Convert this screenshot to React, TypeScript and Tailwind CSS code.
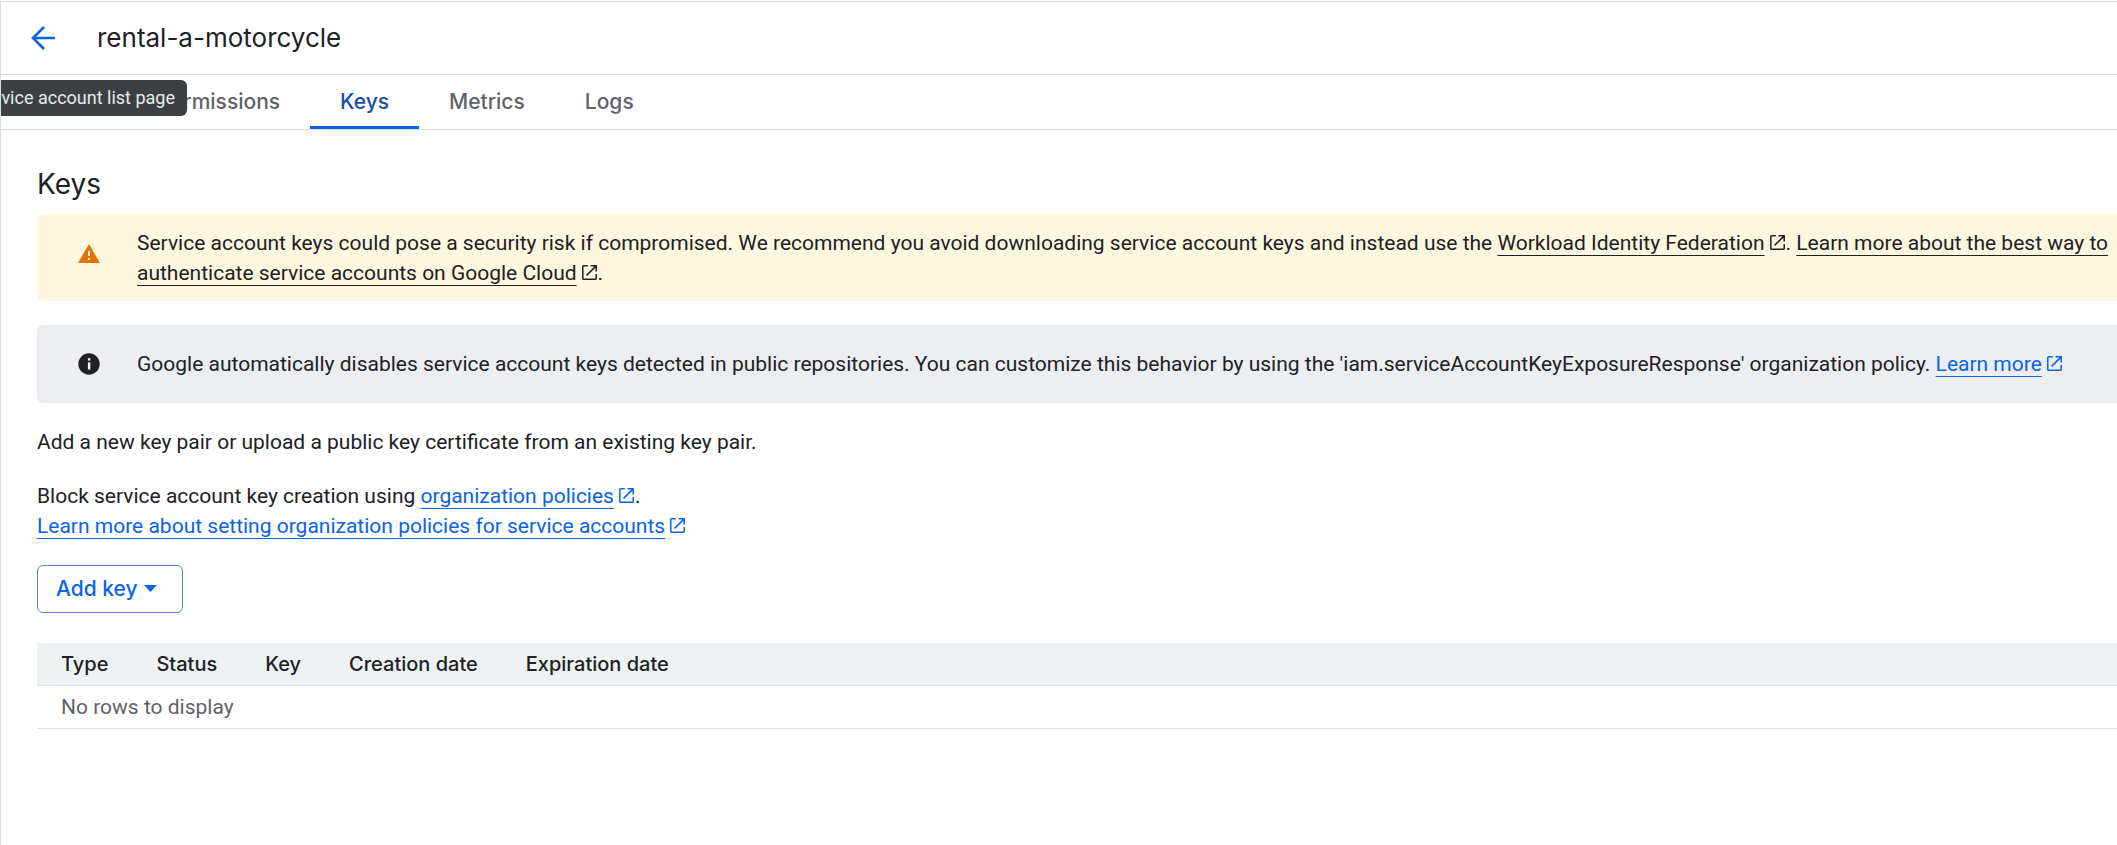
import type { ReactNode } from "react";

const tabs = ["Details", "Permissions", "Keys", "Metrics", "Logs"];
const columns = ["Type", "Status", "Key", "Creation date", "Expiration date"];

function ExternalIcon() {
  return (
    <svg
      viewBox="0 0 15 15"
      className="mr-px ml-[5px] inline-block size-[15px] align-baseline"
      fill="none"
      stroke="currentColor"
      strokeWidth="1.5"
      aria-hidden="true"
    >
      <path d="M5.8.8H1.6Q.8.8.8 1.6v11.8q0 .8.8.8h11.8q.8 0 .8-.8V9M8.6.8h5.6v5.6M13.9 1.1 4.6 10.4" />
    </svg>
  );
}

function ExternalLink({ children, tone }: { children: ReactNode; tone: "dark" | "blue" }) {
  return (
    <a href="#" className={tone === "dark" ? "text-[#202124]" : "text-[#0b63e5]"}>
      <span className="underline decoration-1 underline-offset-[5px] [text-decoration-skip-ink:none]">{children}</span>
      <ExternalIcon />
    </a>
  );
}

export default function App() {
  return (
    <div className="mt-px min-h-[calc(100vh-1px)] overflow-x-hidden border-t border-l border-[#dadce0] bg-white font-[Roboto,sans-serif] text-[21px] leading-[30px] text-[#202124]">
      <header className="relative flex h-[73px] items-center border-b border-[#dadce0] pl-[26px]">
        <button type="button" aria-label="Back" className="flex size-8 items-center justify-center text-[#0b63e5]">
          <svg viewBox="0 0 24 24" className="size-6" fill="none" stroke="currentColor" strokeWidth="2.6" aria-hidden="true">
            <path d="M24 12H2M13 1 2 12l11 11" />
          </svg>
        </button>
        <h1 className="ml-[38px] font-[Inter,sans-serif] text-[26px] leading-9">rental-a-motorcycle</h1>
        <div
          role="tooltip"
          className="absolute top-[78px] right-[calc(100%-186px)] z-10 flex h-9 items-center rounded-md bg-[#3c4043] px-3 text-[18px] whitespace-nowrap text-[#e8eaed]"
        >
          Back to service account list page
        </div>
      </header>

      <nav className="h-[55px] border-b border-[#dadce0]">
        <div className="-ml-0.5 flex h-[54px] font-[Inter,sans-serif] font-medium">
          {tabs.map((tab) => (
            <a
              key={tab}
              href="#"
              className={
                tab === "Keys"
                  ? "flex items-center border-b-3 border-[#0b63e5] px-[30px] pt-[3px] text-[#174ea6]"
                  : "flex items-center px-[30px] text-[#5f6368]"
              }
            >
              {tab}
            </a>
          ))}
        </div>
      </nav>

      <main className="pl-9">
        <h2 className="pt-9 font-[Inter,sans-serif] text-[28px] leading-9">Keys</h2>

        <section className="mt-3 flex rounded-l-md bg-[#fef7e0] pt-[14px] pb-[13px]">
          <svg viewBox="0 0 22 19" className="mt-4 ml-[41px] h-[19px] w-[22px] shrink-0" aria-hidden="true">
            <path fill="#e37400" fillRule="evenodd" d="M11 0 22 19H0ZM10 7v5h2V7Zm0 7v2h2v-2Z" />
          </svg>
          <p className="ml-[37px]">
            Service account keys could pose a security risk if compromised. We recommend you avoid downloading service
            account keys and instead use the <ExternalLink tone="dark">Workload Identity Federation</ExternalLink>.{" "}
            <ExternalLink tone="dark">
              Learn more about the best way to authenticate service accounts on Google Cloud
            </ExternalLink>
            .
          </p>
        </section>

        <section className="mt-6 flex items-center rounded-l-md bg-[#edeef2] py-6">
          <svg viewBox="0 0 22 22" className="ml-[41px] size-[22px] shrink-0" aria-hidden="true">
            <circle cx="11" cy="11" r="10.7" fill="#202124" />
            <path fill="#fff" d="M9.9 9.6h2.4v7H9.9zM9.9 5.2h2.4v2.4H9.9z" />
          </svg>
          <p className="ml-[37px]">
            Google automatically disables service account keys detected in public repositories. You can customize this
            behavior by using the 'iam.serviceAccountKeyExposureResponse' organization policy.{" "}
            <ExternalLink tone="blue">Learn more</ExternalLink>
          </p>
        </section>

        <p className="mt-6">Add a new key pair or upload a public key certificate from an existing key pair.</p>
        <p className="mt-6">
          Block service account key creation using <ExternalLink tone="blue">organization policies</ExternalLink>.
          <br />
          <ExternalLink tone="blue">Learn more about setting organization policies for service accounts</ExternalLink>
        </p>

        <button
          type="button"
          aria-haspopup="menu"
          className="mt-6 flex h-12 items-center gap-1.5 rounded-md border border-[#5a8ad6] pr-[25px] pl-[18px] font-[Inter,sans-serif] font-medium text-[#0b63e5]"
        >
          Add key
          <svg viewBox="0 0 13 7" className="mb-0.5 h-[7px] w-[13px]" fill="currentColor" aria-hidden="true">
            <path d="M0 0h13L6.5 7Z" />
          </svg>
        </button>

        <table className="mt-[30px] w-full border-separate border-spacing-0 text-left">
          <thead>
            <tr className="bg-[#eef2f3]">
              {columns.map((column) => (
                <th
                  key={column}
                  scope="col"
                  className="h-[43px] border-b border-[#dadce0] px-6 font-[Inter,sans-serif] text-[20px] font-medium whitespace-nowrap last:w-full"
                >
                  {column}
                </th>
              ))}
            </tr>
          </thead>
          <tbody>
            <tr>
              <td colSpan={5} className="h-[43px] border-b border-[#dadce0] px-6 text-[#5f6368]">
                No rows to display
              </td>
            </tr>
          </tbody>
        </table>
      </main>
    </div>
  );
}
